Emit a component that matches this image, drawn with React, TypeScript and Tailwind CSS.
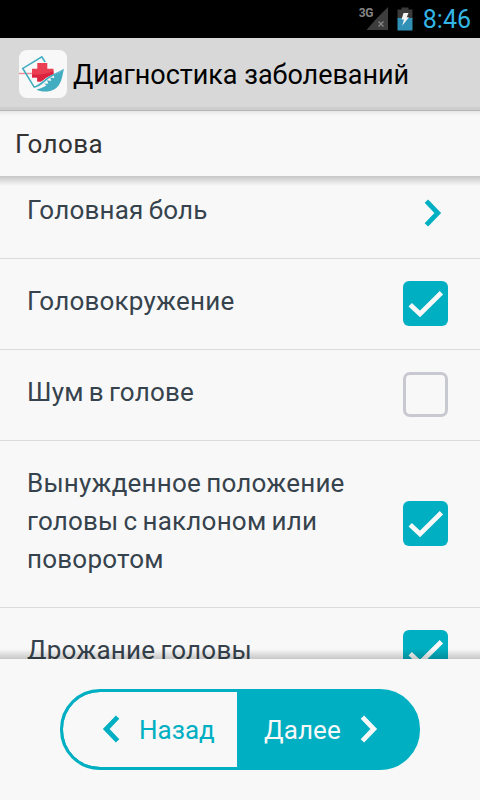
import clsx from 'clsx';

interface Symptom {
  title: string;
  kind: 'link' | 'check';
  checked?: boolean;
}

const symptoms: Symptom[] = [
  { title: 'Головная боль', kind: 'link' },
  { title: 'Головокружение', kind: 'check', checked: true },
  { title: 'Шум в голове', kind: 'check', checked: false },
  { title: 'Вынужденное положение головы с наклоном или поворотом', kind: 'check', checked: true },
  { title: 'Дрожание головы', kind: 'check', checked: true },
];

function Chevron({ className }: { className?: string }) {
  return (
    <svg viewBox="0 0 18 28" className={clsx('w-[18px] h-7 shrink-0', className)} fill="none" stroke="currentColor" strokeWidth="4.8">
      <path d="M2.4 2.2 L13.8 14 L2.4 25.8" />
    </svg>
  );
}

function CheckBox({ checked }: { checked?: boolean }) {
  if (!checked) {
    return <div className="w-[45px] h-[45px] shrink-0 rounded-[7px] border-[3px] border-[#c8c8d0]" />;
  }
  return (
    <div className="w-[45px] h-[45px] shrink-0 rounded-[6px] bg-[#00afc1]">
      <svg viewBox="0 0 45 45" className="w-full h-full" fill="none" stroke="#f8f8f8" strokeWidth="4.8">
        <path d="M7.2 23.7 L17 33 L38.4 11.8" />
      </svg>
    </div>
  );
}

function AppLogo() {
  return (
    <svg viewBox="0 0 48 48" className="w-12 h-12 shrink-0">
      <rect width="48" height="48" rx="8" fill="#f8f8f8" />
      <path d="M0 23.5 H14" stroke="#ee8893" strokeWidth="1.4" />
      <path d="M26.2 12 L22.8 6.8 L3.8 18.4 L15.2 37.2" fill="none" stroke="#42adc1" strokeWidth="1.6" />
      <path d="M18.3 13 H28.3 V18.7 H34.5 V24 C31 25.5 28 27 25.5 29 L22 31.5 H18.3 V27.5 H13 V18.7 H18.3 Z" fill="#ea3f52" />
      <path d="M13 24.5 C20 25 28 24 34.5 21 V24 C31 25.5 28 27 25.5 29 L22 31.5 H18.3 V27.5 H13 Z" fill="#dc2440" />
      {/* leaf */}
      <path d="M14.5 36.6 C20 35 23 31.5 27 28.5 C32 24.5 38 23 45 18.8 C39 24.5 35 25 31 27.8 C26 31 22 36.5 15 38 Z" fill="#42adc1" />
      <path d="M17.5 39.5 C21 38.5 24 37.5 27.5 35.5 L25 33.6 L29.3 33.8 L28 30.3 L32.2 31 L31.2 27.6 L35.2 28 L35 25 C39 23.5 42 22 45 18.8 C43 27 42.5 35 35.5 39.3 C30 42.4 22 42.2 17.5 39.5 Z" fill="#42adc1" />
    </svg>
  );
}

function StatusBar() {
  return (
    <div className="flex h-[38px] shrink-0 items-center justify-end bg-black pr-[9px]">
      <span className="mr-[-15px] mb-[13px] w-[16px] text-[12px] leading-[14px] font-bold tracking-[-0.3px] text-[#858585]">3G</span>
      <svg viewBox="0 0 30 26" className="w-[30px] h-[26px]">
        <path d="M28 1 V24 H16 V13 Z M16 13 V24 H6.5 Z" fill="#3d3d3d" />
        <path d="M18.5 15.5 L23.5 20.5 M23.5 15.5 L18.5 20.5" stroke="#858585" strokeWidth="1.3" />
      </svg>
      <svg viewBox="0 0 16 24" className="ml-[7px] w-4 h-6">
        <path d="M4.5 0.5 H11.5 V2.5 H15.5 V12 H0.5 V2.5 H4.5 Z" fill="#3b3b3b" />
        <rect x="0.5" y="11" width="15" height="12.5" fill="#3190b5" />
        <path d="M6.5 6 H11.5 L9.7 10.2 H12 L5.2 18.8 L7 12.5 H4.5 Z" fill="#f4f4f4" />
      </svg>
      <span className="ml-[10px] text-[25px] leading-[38px] text-[#33b5e5] translate-y-px">8:46</span>
    </div>
  );
}

export default function App() {
  return (
    <div className="flex h-[800px] w-[480px] flex-col overflow-hidden bg-[#f8f8f8] font-['Roboto',sans-serif]">
      <StatusBar />

      {/* Title bar */}
      <header className="flex h-[73px] shrink-0 items-center border-b border-[#b5b5b5] bg-[#d8d8d8] pl-[19px] shadow-[inset_0_-3px_0_#cecece]">
        <AppLogo />
        <h1 className="ml-[6px] translate-y-px text-[27px] leading-[38px] tracking-[-0.03px] text-black whitespace-nowrap">Диагностика заболеваний</h1>
      </header>

      <div className="h-[65px] shrink-0 bg-[linear-gradient(#e6e6e6,#f8f8f8_5px)] pl-[15px]">
        <h2 className="text-[26px] leading-[67px] tracking-[0.4px] text-[#333]">Голова</h2>
      </div>

      {/* Symptom list */}
      <main className="relative h-[483px] shrink-0 overflow-hidden">
        <ul className="-mt-2">
          {symptoms.map((s) => (
            <li key={s.title} className="flex items-center justify-between border-b border-[#dcdcdc] py-[26px] pl-[27px] pr-8">
              <span className="w-[330px] -translate-y-[3px] text-[26px] leading-[38px] tracking-[0.22px] [word-spacing:-1.6px] text-[#36434d]">{s.title}</span>
              {s.kind === 'link' ? (
                <Chevron className="mr-1.5 text-[#00afc1]" />
              ) : (
                <div className="-mt-[5px] -mb-[3px]">
                  <CheckBox checked={s.checked} />
                </div>
              )}
            </li>
          ))}
        </ul>
        <div className="pointer-events-none absolute inset-x-0 top-0 h-[10px] bg-linear-to-b from-black/20 to-transparent" />
        <div className="pointer-events-none absolute inset-x-0 bottom-0 h-[10px] bg-linear-to-t from-black/20 to-transparent" />
      </main>

      <footer className="flex h-[141px] shrink-0 justify-center pt-[30px]">
        <div className="flex h-[81px] w-[360px] overflow-hidden rounded-[40px] border-[3px] border-[#00afc1] bg-[#00afc1] text-[26px]">
          <button className="flex w-[174px] items-center rounded-l-[37px] bg-[#f8f8f8] pl-[39px] text-[#00afc1]">
            <Chevron className="rotate-180 -translate-y-px" />
            <span className="ml-[19px] translate-y-px">Назад</span>
          </button>
          <button className="flex flex-1 items-center pl-[27px] text-[#f8f8f8]">
            <span className="translate-y-px tracking-[0.1px]">Далее</span>
            <Chevron className="ml-[19px] -translate-y-px" />
          </button>
        </div>
      </footer>
    </div>
  );
}
